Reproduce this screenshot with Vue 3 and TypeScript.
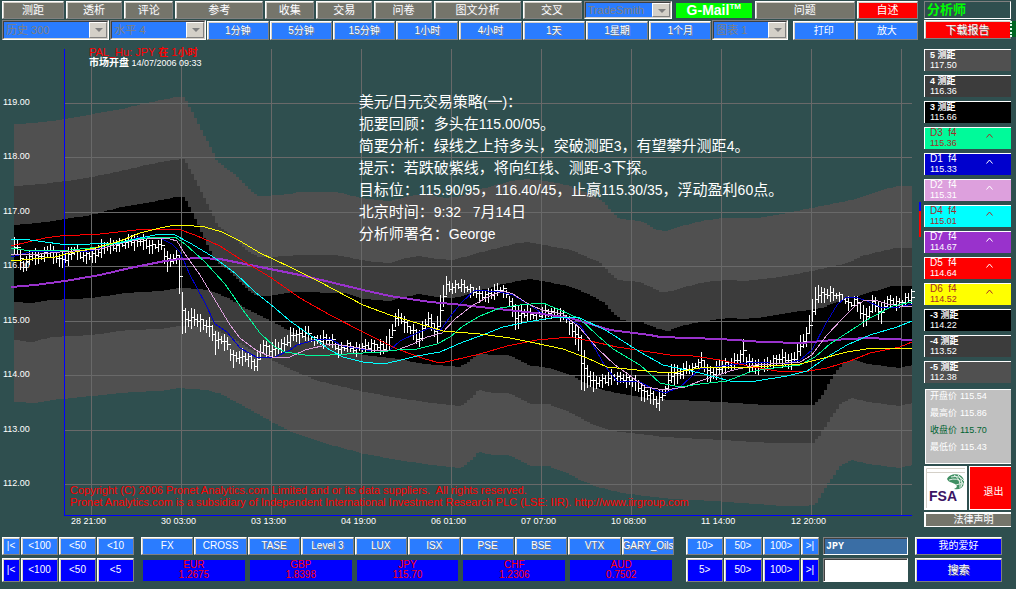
<script setup lang="ts">
import { ref } from 'vue'

type Point = [number, number]

const menu = ['测距', '透析', '评论', '参考', '收集', '交易', '问卷', '图文分析', '交叉']
const periods = ['1分钟', '5分钟', '15分钟', '1小时', '4小时', '1天', '1星期', '1个月']
const markets = ['FX', 'CROSS', 'TASE', 'Level 3', 'LUX', 'ISX', 'PSE', 'BSE', 'VTX', 'GARY_Oils']
const quotes = [
  { code: 'EUR', rate: '1.2675' },
  { code: 'GBP', rate: '1.8398' },
  { code: 'JPY', rate: '115.70' },
  { code: 'CHF', rate: '1.2306' },
  { code: 'AUD', rate: '0.7502' },
]
const levels = [
  { name: '5 测距', value: '117.50', tone: 'outer', arrow: false },
  { name: '4 测距', value: '116.36', tone: 'middle', arrow: false },
  { name: '3 测距', value: '115.66', tone: 'inner', arrow: false },
  { name: 'D3  f4', value: '115.36', tone: 'green', arrow: true },
  { name: 'D1  f4', value: '115.33', tone: 'blue', arrow: true },
  { name: 'D2  f4', value: '115.31', tone: 'plum', arrow: true },
  { name: 'D4  f4', value: '115.01', tone: 'cyan', arrow: true },
  { name: 'D7  f4', value: '114.67', tone: 'violet', arrow: true },
  { name: 'D5  f4', value: '114.64', tone: 'red', arrow: true },
  { name: 'D6  f4', value: '114.52', tone: 'yellow', arrow: true },
  { name: '-3 测距', value: '114.22', tone: 'inner', arrow: false },
  { name: '-4 测距', value: '113.52', tone: 'middle', arrow: false },
  { name: '-5 测距', value: '112.38', tone: 'outer', arrow: false },
]
const prices = [
  { name: '开盘价', value: '115.54' },
  { name: '最高价', value: '115.86' },
  { name: '收盘价', value: '115.70', strong: true },
  { name: '最低价', value: '115.43' },
]
const notes = [
  '美元/日元交易策略(一)：',
  '扼要回顾：多头在115.00/05。',
  '简要分析：绿线之上持多头，突破测距3，有望攀升测距4。',
  '提示：若跌破紫线，将向红线、测距-3下探。',
  '目标位：115.90/95，116.40/45，止赢115.30/35，浮动盈利60点。',
  '北京时间：9:32   7月14日',
  '分析师署名：George',
].map((line) =>
  line
    .split(/([\x20-\x7e]+)/)
    .filter(Boolean)
    .map((text) => ({ text, latin: /^[\x20-\x7e]+$/.test(text) })),
)

const symbol = ref('JPY')
const query = ref('')

const rows = [103, 157, 212, 266, 321, 375, 430, 484].map((y, i) => ({ y, label: `${119 - i}.00` }))
const columns = [
  '28 21:00', '30 03:00', '03 13:00', '04 19:00', '06 01:00',
  '07 07:00', '10 08:00', '11 14:00', '12 20:00', '',
].map((label, i) => ({ x: 91 + i * 90, label }))

const top5: Point[] = [[14,124],[33,123],[65,119],[92,114],[120,109],[140,104],[160,100],[175,97],[183,97],[197,124],[210,149],[216,162],[232,173],[240,181],[250,191],[257,196],[268,196],[275,195],[290,194],[297,192],[335,192],[340,193],[355,197],[375,200],[388,201],[400,198],[412,195],[425,194],[443,198],[460,196],[470,192],[490,186],[510,181],[525,179],[545,181],[565,185],[590,194],[603,203],[610,211],[618,219],[630,220],[643,222],[653,229],[665,231],[680,226],[700,221],[720,218],[755,218],[770,216],[785,213],[805,209],[820,206],[850,200],[870,194],[885,189],[895,186],[912,186]]
const top4: Point[] = [[14,186],[40,184],[80,179],[110,173],[145,165],[165,161],[183,159],[197,186],[210,212],[216,225],[232,237],[245,250],[257,257],[268,257],[285,256],[297,255],[335,255],[345,257],[365,261],[388,263],[400,259],[418,256],[437,259],[452,260],[473,254],[500,247],[517,243],[527,242],[553,247],[570,250],[590,259],[600,263],[608,273],[617,280],[638,282],[650,287],[660,292],[670,291],[683,287],[703,282],[727,280],[743,281],[770,278],[800,273],[820,269],[847,263],[860,256],[880,251],[895,248],[912,248]]
const top3: Point[] = [[14,225],[45,222],[90,215],[120,207],[150,202],[175,197],[183,197],[197,225],[206,245],[213,260],[227,270],[247,290],[255,296],[267,296],[293,292],[345,293],[363,299],[387,301],[403,297],[418,294],[440,298],[453,298],[470,293],[497,285],[527,279],[547,282],[570,287],[593,297],[603,303],[612,313],[620,320],[640,322],[657,329],[667,331],[680,326],[703,321],[727,318],[743,319],[763,317],[800,311],[820,308],[847,298],[867,293],[890,286],[912,286]]
const low3: Point[] = [[14,302],[30,303],[50,300],[90,298],[125,293],[160,291],[177,288],[183,288],[207,290],[227,298],[247,310],[270,321],[290,332],[310,339],[350,350],[363,355],[397,359],[423,364],[458,367],[467,362],[477,353],[490,355],[507,355],[530,366],[543,367],[570,375],[590,387],[620,394],[653,399],[720,402],[763,405],[813,405],[823,392],[832,375],[843,362],[853,360],[867,364],[897,368],[912,365]]
const low4: Point[] = [[14,340],[30,342],[50,337],[90,335],[127,330],[160,329],[177,326],[207,327],[227,335],[247,348],[267,358],[293,371],[317,381],[363,392],[397,398],[430,403],[460,406],[470,398],[477,390],[493,393],[507,393],[530,404],[547,404],[570,413],[590,424],[607,430],[620,432],[663,437],[720,440],[770,443],[812,443],[820,433],[830,417],[840,403],[850,398],[867,402],[897,406],[912,403]]
const low5: Point[] = [[14,402],[33,403],[50,400],[90,396],[130,392],[160,391],[177,388],[205,390],[220,394],[240,405],[267,420],[293,433],[330,445],[363,454],[397,460],[430,465],[460,468],[470,460],[477,452],[493,455],[507,455],[530,466],[547,466],[570,475],[578,480],[597,487],[620,493],[670,499],[713,501],[783,506],[800,506],[813,505],[817,500],[829,480],[840,465],[850,460],[867,464],[897,468],[912,465]]

// Band edges advance one bar (3 units) at a time, so they look stepped.
function levelAt(points: Point[], x: number): number {
  for (let i = 1; i < points.length; i++) {
    const [x0, y0] = points[i - 1]
    const [x1, y1] = points[i]
    if (x <= x1) return Math.round(y0 + ((y1 - y0) * (x - x0)) / (x1 - x0))
  }
  return points[points.length - 1][1]
}
function stepped(points: Point[]): Point[] {
  const out: Point[] = []
  for (let x = 14; x < 912; x += 3) {
    const y = levelAt(points, x)
    out.push([x, y], [Math.min(x + 3, 912), y])
  }
  return out
}
const join = (points: Point[]) => points.map((p) => p.join(',')).join(' ')
const band = (upper: Point[], lower: Point[]) => join([...stepped(upper), ...stepped(lower).reverse()])
const bands = [
  { tone: 'outer', points: band(top5, low5) },
  { tone: 'middle', points: band(top4, low4) },
  { tone: 'inner', points: band(top3, low3) },
]

const averages: { tone: string; points: Point[] }[] = [
  { tone: 'blue', points: [[11,257],[30,252],[90,251],[115,245],[140,237],[160,238],[172,244],[180,252],[190,275],[205,303],[215,324],[227,332],[240,348],[258,358],[275,357],[290,350],[297,345],[315,340],[330,339],[343,346],[367,350],[390,350],[400,341],[417,333],[430,328],[440,331],[452,314],[462,302],[475,290],[500,292],[513,295],[530,305],[543,314],[563,317],[580,325],[593,345],[605,366],[617,381],[640,382],[655,390],[665,393],[680,387],[700,369],[730,365],[755,362],[785,364],[800,360],[812,350],[825,325],[837,305],[845,298],[855,297],[867,301],[880,307],[895,308],[912,304]] },
  { tone: 'violet', points: [[11,287],[35,285],[65,281],[100,275],[130,268],[165,261],[180,259],[200,258],[220,259],[240,263],[270,269],[300,275],[330,282],[363,290],[390,296],[430,302],[453,304],[480,307],[517,311],[543,314],[570,318],[587,323],[610,330],[650,335],[660,337],[720,339],[763,342],[802,343],[833,340],[867,338],[912,340]] },
  { tone: 'red', points: [[11,246],[45,238],[60,236],[100,234],[145,229],[178,229],[195,235],[220,246],[240,259],[270,277],[300,298],[330,315],[363,332],[397,349],[425,359],[440,363],[450,361],[480,354],[507,346],[537,340],[570,337],[590,341],[617,347],[650,352],[670,355],[693,356],[720,360],[753,367],[777,371],[803,372],[827,368],[850,361],[870,353],[900,347],[912,342]] },
  { tone: 'plum', points: [[11,254],[40,254],[60,252],[100,249],[130,241],[150,238],[170,239],[177,241],[185,254],[200,275],[215,300],[230,325],[240,338],[257,351],[272,357],[290,357],[305,350],[330,344],[347,346],[377,351],[397,350],[413,344],[427,337],[442,333],[455,319],[473,305],[490,296],[503,291],[513,294],[530,305],[545,311],[563,314],[580,328],[597,348],[615,365],[632,377],[645,387],[665,390],[685,387],[700,381],[730,371],[755,365],[800,362],[812,355],[827,335],[843,318],[855,306],[865,300],[875,300],[887,304],[900,306],[912,306]] },
  { tone: 'green', points: [[11,248],[30,251],[70,250],[100,247],[130,240],[155,237],[175,237],[185,244],[205,262],[225,284],[245,313],[260,333],[275,347],[285,352],[305,355],[330,355],[380,352],[397,350],[417,349],[437,344],[450,337],[463,326],[480,316],[500,308],[520,305],[543,303],[560,310],[580,319],[597,335],[613,349],[640,365],[660,383],[680,387],[700,384],[727,381],[750,372],[765,369],[800,365],[815,357],[830,344],[850,331],[870,318],[893,306],[912,302]] },
  { tone: 'cyan', points: [[11,239],[30,240],[60,244],[90,244],[120,243],[140,238],[160,234],[175,235],[190,243],[215,258],[235,273],[255,292],[275,308],[290,321],[310,335],[330,350],[343,357],[363,362],[383,364],[397,361],[417,356],[440,352],[463,342],[480,336],[503,327],[527,322],[557,317],[580,318],[607,331],[640,352],[663,365],[700,373],[730,381],[750,382],[787,376],[807,371],[827,357],[847,345],[870,335],[897,327],[912,321]] },
  { tone: 'yellow', points: [[11,261],[55,257],[70,253],[95,248],[120,241],[140,233],[160,228],[175,225],[183,225],[205,227],[222,232],[240,241],[260,253],[290,267],[320,282],[363,305],[390,315],[420,324],[443,331],[480,334],[510,338],[530,342],[563,349],[587,358],[607,367],[657,372],[677,372],[700,368],[753,367],[800,364],[820,359],[847,352],[873,348],[912,348]] },
]

// Price range along the time axis: [x, high, low].
const ranges: [number, number, number][] = [[14,236,256],[17,238,254],[20,252,266],[23,258,272],[26,254,270],[30,248,262],[40,250,262],[50,243,256],[56,250,264],[61,254,268],[74,243,256],[80,249,260],[95,248,262],[100,240,254],[125,238,248],[130,233,246],[145,236,248],[150,240,253],[161,240,249],[164,246,264],[168,252,271],[173,252,264],[178,252,259],[180,256,328],[183,308,332],[195,309,324],[205,318,333],[211,320,334],[214,330,354],[220,332,345],[228,338,350],[231,350,365],[245,350,362],[255,357,373],[258,350,366],[262,336,352],[268,344,357],[275,340,355],[285,336,350],[292,326,340],[298,328,342],[307,325,338],[312,335,344],[325,332,345],[332,335,346],[337,344,355],[347,340,350],[352,344,353],[360,341,352],[373,339,350],[383,341,354],[390,328,345],[395,311,326],[400,309,322],[405,318,331],[412,324,336],[418,330,348],[425,315,330],[429,309,324],[433,320,334],[436,323,344],[440,293,326],[443,282,308],[446,278,292],[452,281,292],[460,278,290],[467,283,292],[475,285,299],[483,290,300],[492,286,301],[498,283,292],[505,286,296],[512,300,314],[515,302,330],[522,306,322],[527,306,318],[537,313,319],[543,305,317],[555,307,317],[565,310,320],[570,318,336],[578,327,348],[581,332,390],[587,365,388],[595,375,388],[605,373,385],[612,370,382],[628,373,384],[636,376,390],[641,382,398],[650,388,402],[656,394,408],[660,388,406],[665,383,394],[671,362,384],[678,366,382],[686,361,374],[692,364,372],[702,352,366],[706,364,378],[712,365,382],[722,358,372],[730,358,370],[740,350,362],[743,338,362],[746,354,366],[752,357,372],[762,360,372],[772,356,366],[780,350,364],[792,353,368],[797,343,360],[802,332,350],[807,326,342],[810,306,332],[813,292,317],[816,288,310],[819,281,299],[823,288,303],[828,286,300],[835,289,298],[843,294,303],[850,300,308],[855,293,305],[860,300,320],[865,310,326],[870,300,316],[873,292,308],[877,300,318],[881,304,320],[886,293,306],[892,296,306],[900,297,307],[912,289,302]]
const highs = ranges.map(([x, y]): Point => [x, y])
const lows = ranges.map(([x, , y]): Point => [x, y])
const wave = (n: number) => Math.round(Math.sin(n * 2.3) * 2 + Math.sin(n * 5.1))
const bars = Array.from({ length: 300 }, (_, i) => {
  const x = 14 + i * 3
  const high = levelAt(highs, x) + wave(i)
  const low = levelAt(lows, x) + wave(i + 7)
  const close = Math.round((high + low) / 2) + wave(i + 3)
  return `M${x} ${high}V${low}M${x} ${close}h3`
}).join('')
</script>

<template>
  <div class="terminal">
    <main class="upper">
      <section class="work">
        <nav class="menu-row">
          <button v-for="item in menu" :key="item" type="button" class="btn slate etched">{{ item }}</button>
          <label class="pick"><select aria-label="交易系统"><option>TradeSmith</option></select></label>
          <a class="mail" href="#">G-Mail<sup>TM</sup></a>
          <button type="button" class="btn slate etched">问题</button>
          <button type="button" class="btn red">自述</button>
        </nav>
        <nav class="period-row">
          <label class="pick"><select aria-label="历史"><option>历史 300</option></select></label>
          <label class="pick"><select aria-label="水平"><option>水平 4</option></select></label>
          <button v-for="item in periods" :key="item" type="button" class="btn sky etched">{{ item }}</button>
          <label class="pick chart-pick"><select aria-label="图表"><option>图表 1</option></select></label>
          <button type="button" class="btn sky">打印</button>
          <button type="button" class="btn sky">放大</button>
        </nav>

        <div class="chart">
          <svg viewBox="0 40 920 488" role="img" aria-label="JPY 1小时">
            <g shape-rendering="crispEdges">
              <polygon v-for="b in bands" :key="b.tone" :class="['band', b.tone]" :points="b.points" />
              <path v-for="r in rows" :key="r.y" class="grid" :d="`M64 ${r.y + 0.5}H912`" />
              <path v-for="c in columns" :key="c.x" class="grid" :d="`M${c.x + 0.5} 49V515`" />
              <path class="axis" d="M64.5 49V515.5H912" />
            </g>
            <text v-for="r in rows" :key="r.label" class="tick" x="3" :y="r.y + 2">{{ r.label }}</text>
            <text v-for="c in columns" :key="c.x" class="tick" :x="c.x - 20" y="524">{{ c.label }}</text>
            <g shape-rendering="crispEdges">
              <path class="bars" :d="bars" transform="translate(.5 .5)" />
              <polyline v-for="a in averages" :key="a.tone" :class="['average', a.tone]" :points="join(a.points)" />
              <path class="last" d="M911.5 289V302M912 291.5h3" />
              <path class="up" d="M920 202v9" />
              <path class="down" d="M920 211v26" />
            </g>
            <text class="title" x="89" y="56">PAL_Hu: JPY <tspan class="heavy">在</tspan> 1<tspan class="heavy">小时</tspan></text>
            <text class="opened" x="89" y="66"><tspan class="heavy">市场开盘</tspan> 14/07/2006 09:33</text>
            <text class="legal" x="70" y="494">Copyright (C) 2006 Pronet Analytics.com Limited and or its data suppliers.&nbsp; All rights reserved.</text>
            <text class="legal" x="70" y="506">Pronet Analytics.com is a subsidiary of Independent International Investment Research PLC (LSE: IIR). http://www.iirgroup.com</text>
          </svg>
          <div class="notes">
            <p v-for="(line, i) in notes" :key="i"><span v-for="(run, j) in line" :key="j" :class="{ latin: run.latin }">{{ run.text }}</span></p>
          </div>
        </div>
      </section>

      <aside class="side">
        <div class="analyst">分析师</div>
        <div class="report"><button type="button" class="btn red etched">下载报告</button></div>
        <ul class="levels">
          <li v-for="l in levels" :key="l.name" :class="l.tone">
            <span class="name">{{ l.name }}</span><span>{{ l.value }}</span>
            <svg v-if="l.arrow" class="caret" viewBox="0 0 7 5" aria-hidden="true"><path d="M0.5 4.5L3.5 1L6.5 4.5" /></svg>
          </li>
        </ul>
        <dl class="prices">
          <div v-for="p in prices" :key="p.name" :class="{ strong: p.strong }"><dt>{{ p.name }}</dt><dd>{{ p.value }}</dd></div>
        </dl>
        <div class="pair">
          <a href="#" class="fsa" aria-label="FSA">
            <svg viewBox="0 0 43 44">
              <path class="frame" d="M2.500 42V2.500H41M2 6.500H41" />
              <g class="globe">
                <path d="M23 13C25 8 35 6 39 12C42 18 38 25 30 23C33 22 34 20 31 18C28 16 25 17 23 13Z" />
                <path class="cut" d="M25 14Q33 11 39 17M27 11Q36 9 40 15M30 9Q37 13 36 22M34 9Q40 15 37 21M32 19Q36 17 40 18" />
              </g>
              <text x="5" y="35">FSA</text>
            </svg>
          </a>
          <button type="button" class="exit">退出</button>
        </div>
        <button type="button" class="notice etched">法律声明</button>
      </aside>
    </main>

    <footer>
      <div class="foot light">
        <div class="back">
          <button v-for="t in ['|<', '<100', '<50', '<10']" :key="t" type="button" class="btn sky">{{ t }}</button>
        </div>
        <div class="markets">
          <button v-for="(m, i) in markets" :key="m" type="button" :class="['btn', 'sky', { etched: i > 1 }]">{{ m }}</button>
        </div>
        <div class="forward">
          <button v-for="t in ['10>', '50>', '100>', '>|']" :key="t" type="button" class="btn sky">{{ t }}</button>
        </div>
        <input v-model="symbol" class="symbol" type="text" aria-label="代码" />
        <button type="button" class="btn navy favourite">我的爱好</button>
      </div>
      <div class="foot deep">
        <div class="back">
          <button v-for="t in ['|<', '<100', '<50', '<5']" :key="t" type="button" class="btn navy">{{ t }}</button>
        </div>
        <div class="quotes">
          <a v-for="q in quotes" :key="q.code" href="#"><span>{{ q.code }}</span><span>{{ q.rate }}</span></a>
        </div>
        <div class="forward">
          <button v-for="t in ['5>', '50>', '100>', '>|']" :key="t" type="button" class="btn navy">{{ t }}</button>
        </div>
        <input v-model="query" type="text" aria-label="查询" />
        <button type="button" class="btn navy etched search">搜索</button>
      </div>
    </footer>
  </div>
</template>

<style>
body {
  margin: 0;
  background: #2f4f4f;
}
</style>

<style scoped>
.terminal,
.terminal * {
  box-sizing: border-box;
}
.terminal {
  min-height: 100vh;
  overflow: hidden;
  background: #2f4f4f;
  color: #fff;
  font-family: "Liberation Sans", "Noto Sans CJK SC", sans-serif;
  font-size: 9px;
}
button,
input,
select {
  font-family: inherit;
  min-width: 0;
}
.upper {
  display: grid;
  grid-template-columns: minmax(0, 1fr) 96px;
}

/* Buttons */
.btn {
  padding: 0;
  border: 1px solid;
  border-color: #fff #808080 #808080 #fff;
  box-shadow: inset 1px 1px 0 #d4d0c8;
  color: #fff;
  font-size: 10px;
  line-height: 12px;
  white-space: nowrap;
  overflow: hidden;
}
.slate {
  background: #75756b;
}
.sky {
  background: #2a7cff;
}
.red {
  background: #f00;
}
.navy {
  background: #00f;
}
.etched {
  text-shadow: 1px 1px 0 #808080;
}

/* Toolbars */
.menu-row,
.period-row {
  display: grid;
  padding: 0 2px;
}
.menu-row {
  margin-top: 1px;
  height: 19px;
  padding-bottom: 1px;
  column-gap: 2px;
  grid-template-columns: 62fr 56fr 49fr 88fr 49fr 56fr 58fr 86fr 59fr 88fr 79fr 100fr 61fr;
}
.period-row {
  height: 20px;
  column-gap: 1px;
  grid-template-columns: 107fr 95fr repeat(8, 62fr) 75fr 66fr 62fr;
}
.menu-row .btn {
  font-size: 11px;
}
.period-row .btn {
  margin-top: 1px;
}
.period-row .chart-pick + .btn {
  margin-left: 4px;
}
.pick {
  position: relative;
  display: flex;
  min-width: 0;
  border: 1px solid;
  border-color: #808080 #fff #fff #808080;
}
.pick select {
  width: 100%;
  padding: 0 18px 0 2px;
  border: 1px solid;
  border-color: #404040 #d4d0c8 #d4d0c8 #404040;
  border-radius: 0;
  background: #2a7cff;
  color: #808080;
  font-size: 11px;
  line-height: 14px;
  appearance: none;
}
.pick::before {
  content: "";
  position: absolute;
  top: 1px;
  right: 1px;
  bottom: 1px;
  width: 16px;
  border: 1px solid;
  border-color: #fff #808080 #808080 #fff;
  background: #d4d0c8;
  pointer-events: none;
}
.pick::after {
  content: "";
  position: absolute;
  top: 7px;
  right: 5px;
  border: 4px solid transparent;
  border-top-color: #808080;
  border-bottom: 0;
  pointer-events: none;
}
.mail {
  display: flex;
  justify-content: center;
  margin: 2px 1px 1px 2px;
  background: #0f0;
  color: #fff;
  font-size: 14px;
  font-weight: bold;
  line-height: 15px;
  text-decoration: none;
}
.mail sup {
  font-size: 8px;
  line-height: 8px;
}

/* Chart */
.chart {
  position: relative;
}
.chart svg {
  display: block;
  width: 100%;
  height: auto;
  overflow: visible;
}
.band.outer {
  fill: #505050;
}
.band.middle {
  fill: #3c3c3c;
}
.band.inner {
  fill: #000;
}
.grid {
  stroke: #696969;
}
.axis {
  fill: none;
  stroke: #00f;
}
.bars,
.last {
  fill: none;
  stroke: #fff;
}
.average {
  fill: none;
}
.average.blue {
  stroke: #0000cd;
}
.average.violet {
  stroke: #9932cc;
  stroke-width: 2;
}
.average.red {
  stroke: #f00;
}
.average.plum {
  stroke: #dda0dd;
}
.average.green {
  stroke: #00fa9a;
}
.average.cyan {
  stroke: #0ff;
}
.average.yellow {
  stroke: #ff0;
}
.up {
  stroke: #00f;
  stroke-width: 2;
}
.down {
  stroke: #f00;
  stroke-width: 2;
}
.tick,
.opened {
  fill: #fff;
  font-size: 9px;
}
.title {
  fill: #f00;
  font-size: 11px;
}
.heavy {
  font-size: 10px;
  font-weight: bold;
}
.legal {
  fill: #f00;
  font-size: 11px;
}
.notes {
  position: absolute;
  top: 51px;
  left: 39%;
  font-size: 15px;
  line-height: 22px;
}
.notes p {
  height: 22px;
  margin: 0;
  white-space: pre;
}
.notes .latin {
  font-size: 14px;
}

/* Side column */
.side {
  display: flex;
  flex-direction: column;
  padding: 1px 5px 0 4px;
}
.analyst {
  height: 18px;
  padding-left: 2px;
  border: 1px solid;
  border-color: #808080 #fff #fff #808080;
  color: #0f0;
  font-size: 13px;
  font-weight: bold;
  line-height: 15px;
}
.report {
  position: relative;
  display: flex;
  height: 19px;
  margin-top: 1px;
}
.report .btn {
  flex: 1;
  font-size: 11px;
}
.report::after {
  content: "";
  position: absolute;
  top: 1px;
  right: -5px;
  width: 4px;
  height: 16px;
  border-left: 2px dotted #dfe;
  background: #062;
}
.levels {
  display: grid;
  gap: 4px;
  margin: 10px 0 0;
  padding: 0;
  list-style: none;
}
.levels li {
  position: relative;
  display: flex;
  flex-direction: column;
  height: 22px;
  padding-left: 5px;
  border: solid #fff;
  border-width: 1px 0 0 1px;
  line-height: 10px;
  white-space: pre;
}
.levels .name {
  font-size: 10px;
}
.levels .inner .name,
.levels .middle .name,
.levels .outer .name {
  font-size: 9px;
  font-weight: bold;
}
.levels .outer {
  background: #505050;
}
.levels .middle {
  background: #3c3c3c;
}
.levels .inner {
  background: #000;
}
.levels .green {
  background: #00fa9a;
  color: #a52a2a;
}
.levels .blue {
  background: #0000cd;
}
.levels .plum {
  background: #dda0dd;
}
.levels .cyan {
  background: #0ff;
  color: #a52a2a;
}
.levels .violet {
  background: #9932cc;
}
.levels .red {
  background: #f00;
}
.levels .yellow {
  background: #ff0;
  color: #a52a2a;
}
.caret {
  position: absolute;
  top: 5px;
  right: 18px;
  width: 7px;
  height: 5px;
  fill: none;
  stroke: currentColor;
}
.prices {
  height: 75px;
  margin: 6px 0 0 1px;
  padding: 0 0 0 4px;
  border: 1px solid #fff;
  border-right: 0;
  background: #c0c0c0;
}
.prices div {
  display: flex;
  gap: 3px;
  height: 17px;
  line-height: 13px;
}
.prices dd {
  margin: 0;
}
.prices .strong {
  color: #006432;
}
.pair {
  display: grid;
  grid-template-columns: 43fr 42fr;
  gap: 2px;
  height: 44px;
  margin-top: 2px;
}
.fsa {
  background: #fff;
}
.fsa svg {
  display: block;
  width: 100%;
  height: 100%;
}
.fsa text {
  fill: #3c1464;
  font-size: 14px;
  font-weight: bold;
}
.frame {
  fill: none;
  stroke: #d4d0c8;
}
.globe {
  fill: #3f8f62;
}
.cut {
  fill: none;
  stroke: #e4f2e8;
}
.exit {
  padding: 4px 0 0 6px;
  border: solid #fff;
  border-width: 1px 0 1px 1px;
  background: #f00;
  color: #fff;
  font-size: 10px;
}
.notice {
  height: 15px;
  margin: 2px 0 -1px;
  padding: 0 0 0 10px;
  border: solid #fff;
  border-width: 2px 0 1px 2px;
  background: #75756b;
  color: #fff;
  font-size: 10px;
  line-height: 12px;
}

/* Footer */
footer {
  display: grid;
  gap: 3px;
  margin-top: 9px;
  padding: 0 14px 0 2px;
}
.foot {
  display: grid;
  grid-template-columns: 135fr 541fr 133fr 88fr 87fr;
  column-gap: 4px;
}
.light {
  height: 18px;
}
.deep {
  height: 24px;
}
.foot > div {
  display: grid;
  min-width: 0;
  column-gap: 1px;
}
.foot .back {
  margin-right: 3px;
  grid-template-columns: 18fr 37fr 37fr 37fr;
}
.foot .forward {
  grid-template-columns: 37fr 37fr 37fr 18fr;
}
.foot .markets {
  margin-right: 8px;
  grid-template-columns: repeat(10, minmax(0, 1fr));
}
.foot .quotes {
  margin: 2px 10px 1px 2px;
  column-gap: 5px;
  grid-template-columns: repeat(5, minmax(0, 1fr));
}
.quotes a {
  display: flex;
  flex-direction: column;
  align-items: center;
  background: #00f;
  color: #f00;
  font-size: 10px;
  line-height: 10px;
  text-decoration: none;
}
.foot input {
  width: auto;
  margin-right: 3px;
  padding: 0 2px;
  border: 1px solid;
  border-color: #808080 #fff #fff #808080;
  box-shadow: inset 1px 1px 0 #404040;
  background: #fff;
  color: #000;
  font-size: 10px;
}
.foot .symbol {
  background: #3a6ea5;
  color: #fff;
  font-family: "Liberation Mono", monospace;
  font-weight: bold;
}
.foot .search {
  font-size: 11px;
}
</style>
